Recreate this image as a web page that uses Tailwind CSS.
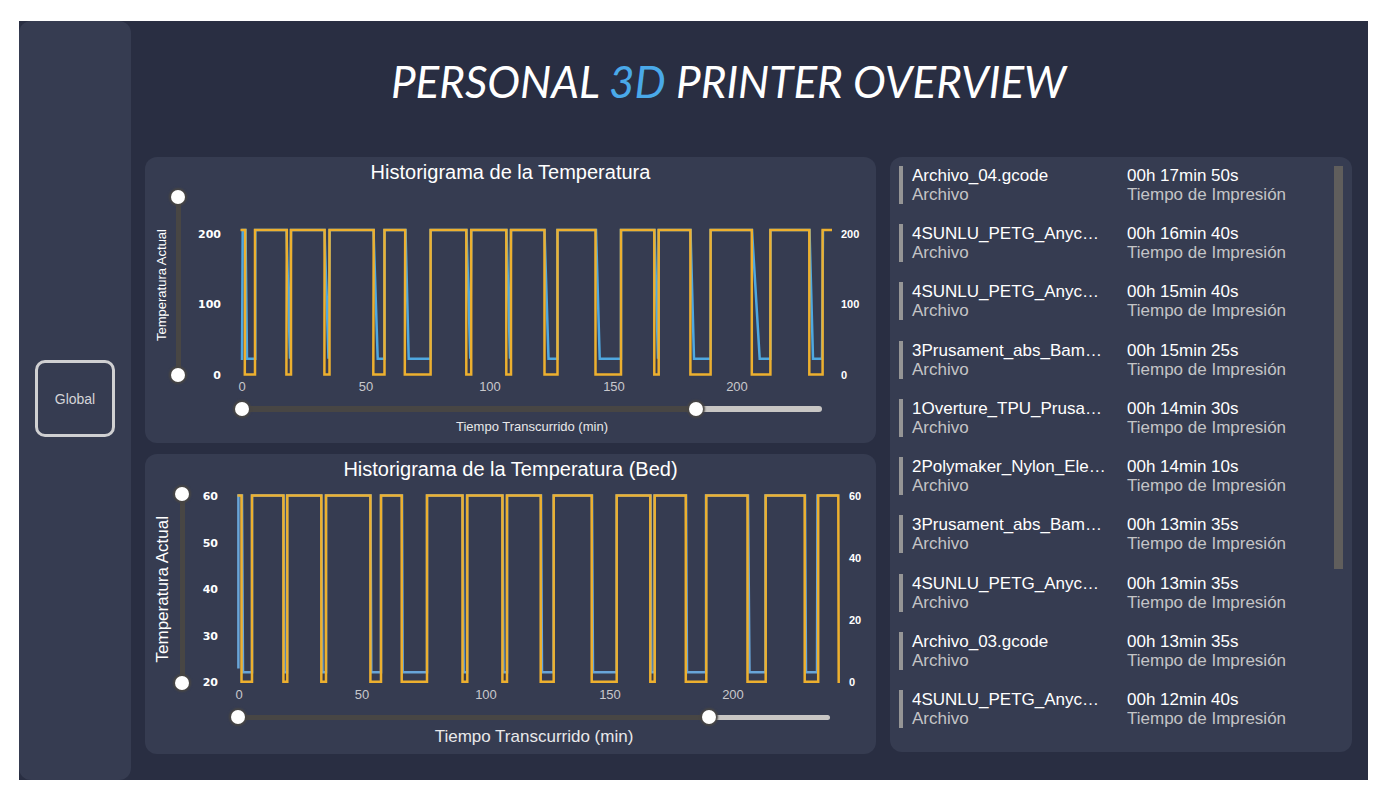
<!DOCTYPE html>
<html lang="es">
<head>
<meta charset="utf-8">
<title>Personal 3D Printer Overview</title>
<script src="https://cdn.jsdelivr.net/npm/@tailwindcss/browser@4"></script>
</head>
<body class="flex min-h-screen bg-white pt-[21px] pr-6 pb-5 pl-[19px] font-['Liberation_Sans',Arial,sans-serif]">
<div class="flex flex-1 bg-[#292e42]">
  <nav class="flex w-28 shrink-0 items-center justify-center rounded-xl bg-[#363c51] pb-1" aria-label="Páginas">
    <button type="button" class="h-[77px] w-20 rounded-[10px] border-[3px] border-[#d0d0d2] text-sm text-[#d4d4d8]">Global</button>
  </nav>

  <main class="flex min-w-0 flex-1 flex-col pr-4 pb-[26px] pl-[14px]">
    <header class="flex h-[136px] items-center justify-center pr-10 pb-4">
      <h1 class="whitespace-nowrap font-['Lato',sans-serif] text-[44px] leading-none text-white italic">PERSONAL <span class="text-[#4aa9e9]">3D</span> PRINTER OVERVIEW</h1>
    </header>

    <div class="grid grid-cols-[731fr_462fr] items-start gap-[14px]">
      <div class="flex min-w-0 flex-col gap-[11px]">

        <section class="rounded-xl bg-[#363c51] pb-2" aria-labelledby="t1">
          <h2 id="t1" class="text-center text-xl leading-[30px] text-white">Historigrama de la Temperatura</h2>
          <div class="grid grid-cols-[26px_14px_1fr]">
            <div class="flex items-center justify-end pr-px pb-[14px]">
              <span class="rotate-180 text-[13px] leading-4 whitespace-nowrap text-white [writing-mode:vertical-rl]">Temperatura Actual</span>
            </div>
            <div class="relative mt-[3px] h-48">
              <div class="absolute inset-y-[7px] left-[5px] w-[5px] bg-[#484644]"></div>
              <input type="range" min="0" max="250" value="0" aria-label="Temperatura mínima" class="pointer-events-none absolute inset-0 h-full w-[14px] appearance-none bg-transparent [direction:rtl] [writing-mode:vertical-lr] [&::-webkit-slider-thumb]:pointer-events-auto [&::-webkit-slider-thumb]:size-[14px] [&::-webkit-slider-thumb]:appearance-none [&::-webkit-slider-thumb]:rounded-full [&::-webkit-slider-thumb]:bg-white [&::-webkit-slider-thumb]:shadow-[0_0_2px_2px_#484644]">
              <input type="range" min="0" max="250" value="250" aria-label="Temperatura máxima" class="pointer-events-none absolute inset-0 h-full w-[14px] appearance-none bg-transparent [direction:rtl] [writing-mode:vertical-lr] [&::-webkit-slider-thumb]:pointer-events-auto [&::-webkit-slider-thumb]:size-[14px] [&::-webkit-slider-thumb]:appearance-none [&::-webkit-slider-thumb]:rounded-full [&::-webkit-slider-thumb]:bg-white [&::-webkit-slider-thumb]:shadow-[0_0_2px_2px_#484644]">
            </div>
            <svg viewBox="190 187 686 210" class="ml-[5px] h-auto w-[calc(100%-5px)]" role="img" aria-label="Temperatura actual por tiempo transcurrido">
              <g class="fill-white font-['DejaVu_Sans',sans-serif] text-[11px] font-bold" text-anchor="end">
                <text x="221" y="238">200</text><text x="221" y="308">100</text><text x="221" y="379">0</text>
              </g>
              <g class="fill-white font-['Liberation_Sans_Narrow','Liberation_Sans',sans-serif] text-[11px] font-bold">
                <text x="841" y="238">200</text><text x="841" y="308">100</text><text x="841" y="379">0</text>
              </g>
              <g class="fill-[#c8c8cc] text-[13px]" text-anchor="middle">
                <text x="242" y="391">0</text><text x="366" y="391">50</text><text x="490" y="391">100</text><text x="614" y="391">150</text><text x="737" y="391">200</text>
              </g>
              <path class="fill-none stroke-[#4fa8e0] stroke-[2.5]" d="M242 360L242.7 230H245.5L247 358.7H255.3V230H286.5L290 358.7L291 230H324.5L328.5 358.7L329.7 230H373.5L377.7 358.7H384.5V230H405.5L408.7 358.7H430.7V230H466.5L470.3 358.7L471.3 230H506.5L510 358.7L511 230H544.5L548.5 358.7H557.5V230H596L599.7 358.7H621V230H654.5L658 358.7L658.7 230H690.5L694 358.7H710.7V230H752L759.7 358.7H770.5V230H809.5L813 358.7H822L823 230"/>
              <path class="fill-none stroke-[#edb02f] stroke-[2.5]" d="M240.5 230H245.2L244.8 374.5H255V230H286.8L286.4 374.5H291V230H324.6L324.4 374.5H329.5V230H373.7L373.3 374.5H384.5V230H405.2L404.8 374.5H430.6V230H466.3V374.5H471.2V230H506.3V374.5H511V230H544.5V374.5H557.5V230H595.5V374.5H621V230H654.3V374.5H658.7V230H690.4V374.5H710.6V230H751.8V374.5H770.4V230H809.3V374.5H822.6V230H832"/>
            </svg>
          </div>
          <div class="relative mt-[5px] mr-[54px] ml-[97px] flex h-[14px] items-center">
            <div class="h-[6px] flex-1 rounded-full bg-[#c8c6c4]"><div class="h-full rounded-l-full bg-[#484644]" style="width:78.2%"></div></div>
            <input type="range" min="0" max="1000" value="0" aria-label="Tiempo inicial" class="pointer-events-none absolute -left-[7px] h-[14px] w-[calc(100%+14px)] appearance-none bg-transparent [&::-webkit-slider-thumb]:pointer-events-auto [&::-webkit-slider-thumb]:size-[14px] [&::-webkit-slider-thumb]:appearance-none [&::-webkit-slider-thumb]:rounded-full [&::-webkit-slider-thumb]:bg-white [&::-webkit-slider-thumb]:shadow-[0_0_2px_2px_#484644]">
            <input type="range" min="0" max="1000" value="782" aria-label="Tiempo final" class="pointer-events-none absolute -left-[7px] h-[14px] w-[calc(100%+14px)] appearance-none bg-transparent [&::-webkit-slider-thumb]:pointer-events-auto [&::-webkit-slider-thumb]:size-[14px] [&::-webkit-slider-thumb]:appearance-none [&::-webkit-slider-thumb]:rounded-full [&::-webkit-slider-thumb]:bg-white [&::-webkit-slider-thumb]:shadow-[0_0_2px_2px_#484644]">
          </div>
          <p class="mt-[3px] mr-[54px] ml-[97px] text-center text-[13px] leading-4 text-[#e8e8ea]">Tiempo Transcurrido (min)</p>
        </section>

        <section class="rounded-xl bg-[#363c51] pb-[7px]" aria-labelledby="t2">
          <h2 id="t2" class="text-center text-xl leading-[30px] text-white">Historigrama de la Temperatura (Bed)</h2>
          <div class="grid grid-cols-[30px_14px_1fr]">
            <div class="flex items-center justify-end pr-[2px] pb-[11px]">
              <span class="rotate-180 text-[17px] leading-5 whitespace-nowrap text-white [writing-mode:vertical-rl]">Temperatura Actual</span>
            </div>
            <div class="relative mt-[3px] h-[203px]">
              <div class="absolute inset-y-[7px] left-[5px] w-[5px] bg-[#484644]"></div>
              <input type="range" min="20" max="60" value="20" aria-label="Temperatura mínima de la cama" class="pointer-events-none absolute inset-0 h-full w-[14px] appearance-none bg-transparent [direction:rtl] [writing-mode:vertical-lr] [&::-webkit-slider-thumb]:pointer-events-auto [&::-webkit-slider-thumb]:size-[14px] [&::-webkit-slider-thumb]:appearance-none [&::-webkit-slider-thumb]:rounded-full [&::-webkit-slider-thumb]:bg-white [&::-webkit-slider-thumb]:shadow-[0_0_2px_2px_#484644]">
              <input type="range" min="20" max="60" value="60" aria-label="Temperatura máxima de la cama" class="pointer-events-none absolute inset-0 h-full w-[14px] appearance-none bg-transparent [direction:rtl] [writing-mode:vertical-lr] [&::-webkit-slider-thumb]:pointer-events-auto [&::-webkit-slider-thumb]:size-[14px] [&::-webkit-slider-thumb]:appearance-none [&::-webkit-slider-thumb]:rounded-full [&::-webkit-slider-thumb]:bg-white [&::-webkit-slider-thumb]:shadow-[0_0_2px_2px_#484644]">
            </div>
            <svg viewBox="190 484 686 221" class="ml-px h-auto w-[calc(100%-1px)]" role="img" aria-label="Temperatura de la cama por tiempo transcurrido">
              <g class="fill-white font-['DejaVu_Sans',sans-serif] text-[11px] font-bold" text-anchor="end">
                <text x="218" y="500">60</text><text x="218" y="547">50</text><text x="218" y="593">40</text><text x="218" y="640">30</text><text x="218" y="686">20</text>
              </g>
              <g class="fill-white font-['Liberation_Sans_Narrow','Liberation_Sans',sans-serif] text-[11px] font-bold">
                <text x="849" y="500">60</text><text x="849" y="562">40</text><text x="849" y="624">20</text><text x="849" y="686">0</text>
              </g>
              <g class="fill-[#c8c8cc] text-[13px]" text-anchor="middle">
                <text x="239" y="699">0</text><text x="362" y="699">50</text><text x="486" y="699">100</text><text x="610" y="699">150</text><text x="733" y="699">200</text>
              </g>
              <path class="fill-none stroke-[#69a5d8] stroke-[2.5]" d="M238.4 668.5V495.5H242L243 672.3H252V495.5H283.5L284.3 672.3H287V495.5H321.3L322.5 672.3H326V495.5H370.5L371.3 672.3H381V495.5H402L402.7 672.3H427V495.5H462.5L463.7 672.3H467V495.5H502.5L503.5 672.3H507V495.5H541L542 672.3H553.7V495.5H592L593 672.3H616.7V495.5H650.5L651.5 672.3H654.5V495.5H686L687 672.3H706V495.5H748L749.5 672.3H765.5V495.5H805L806 672.3H817L817.5 495.5H838.5"/>
              <path class="fill-none stroke-[#edb02f] stroke-[2.5]" d="M237.5 495.5H241.5V681.7H252V495.5H283.4V681.7H287.3V495.5H321.3V681.7H326V495.5H370.4V681.7H381V495.5H401.7V681.7H427V495.5H462.5V681.7H467.3V495.5H502.4V681.7H507V495.5H540.7V681.7H553.7V495.5H591.7V681.7H616.7V495.5H650.3V681.7H654.7V495.5H685.8V681.7H706.3V495.5H747.5V681.7H765.7V495.5H804.7V681.7H818.2V495.5H838.3L838.7 683"/>
            </svg>
          </div>
          <div class="relative mt-[5px] mr-[46px] ml-[93px] flex h-[14px] items-center">
            <div class="h-[5px] flex-1 rounded-full bg-[#c8c6c4]"><div class="h-full rounded-l-full bg-[#484644]" style="width:79.6%"></div></div>
            <input type="range" min="0" max="1000" value="0" aria-label="Tiempo inicial de la cama" class="pointer-events-none absolute -left-[7px] h-[14px] w-[calc(100%+14px)] appearance-none bg-transparent [&::-webkit-slider-thumb]:pointer-events-auto [&::-webkit-slider-thumb]:size-[14px] [&::-webkit-slider-thumb]:appearance-none [&::-webkit-slider-thumb]:rounded-full [&::-webkit-slider-thumb]:bg-white [&::-webkit-slider-thumb]:shadow-[0_0_2px_2px_#484644]">
            <input type="range" min="0" max="1000" value="796" aria-label="Tiempo final de la cama" class="pointer-events-none absolute -left-[7px] h-[14px] w-[calc(100%+14px)] appearance-none bg-transparent [&::-webkit-slider-thumb]:pointer-events-auto [&::-webkit-slider-thumb]:size-[14px] [&::-webkit-slider-thumb]:appearance-none [&::-webkit-slider-thumb]:rounded-full [&::-webkit-slider-thumb]:bg-white [&::-webkit-slider-thumb]:shadow-[0_0_2px_2px_#484644]">
          </div>
          <p class="mt-[3px] mr-[46px] ml-[93px] text-center text-[17px] leading-5 text-[#e8e8ea]">Tiempo Transcurrido (min)</p>
        </section>
      </div>

      <section class="flex min-w-0 gap-2 rounded-xl bg-[#363c51] pt-[9px] pr-[9px] pb-6 pl-[9px]" aria-label="Impresiones">
        <ul class="flex min-h-[562px] min-w-0 flex-1 flex-col justify-between text-[17px] leading-[19px] text-[#c4c4c6]">
          <li class="grid grid-cols-[215px_1fr] border-l-4 border-[#959595] pl-[9px]"><div><p class="text-white">Archivo_04.gcode</p><p>Archivo</p></div><div><p class="text-white">00h 17min 50s</p><p>Tiempo de Impresión</p></div></li>
          <li class="grid grid-cols-[215px_1fr] border-l-4 border-[#959595] pl-[9px]"><div><p class="text-white">4SUNLU_PETG_Anyc…</p><p>Archivo</p></div><div><p class="text-white">00h 16min 40s</p><p>Tiempo de Impresión</p></div></li>
          <li class="grid grid-cols-[215px_1fr] border-l-4 border-[#959595] pl-[9px]"><div><p class="text-white">4SUNLU_PETG_Anyc…</p><p>Archivo</p></div><div><p class="text-white">00h 15min 40s</p><p>Tiempo de Impresión</p></div></li>
          <li class="grid grid-cols-[215px_1fr] border-l-4 border-[#959595] pl-[9px]"><div><p class="text-white">3Prusament_abs_Bam…</p><p>Archivo</p></div><div><p class="text-white">00h 15min 25s</p><p>Tiempo de Impresión</p></div></li>
          <li class="grid grid-cols-[215px_1fr] border-l-4 border-[#959595] pl-[9px]"><div><p class="text-white">1Overture_TPU_Prusa…</p><p>Archivo</p></div><div><p class="text-white">00h 14min 30s</p><p>Tiempo de Impresión</p></div></li>
          <li class="grid grid-cols-[215px_1fr] border-l-4 border-[#959595] pl-[9px]"><div><p class="text-white">2Polymaker_Nylon_Ele…</p><p>Archivo</p></div><div><p class="text-white">00h 14min 10s</p><p>Tiempo de Impresión</p></div></li>
          <li class="grid grid-cols-[215px_1fr] border-l-4 border-[#959595] pl-[9px]"><div><p class="text-white">3Prusament_abs_Bam…</p><p>Archivo</p></div><div><p class="text-white">00h 13min 35s</p><p>Tiempo de Impresión</p></div></li>
          <li class="grid grid-cols-[215px_1fr] border-l-4 border-[#959595] pl-[9px]"><div><p class="text-white">4SUNLU_PETG_Anyc…</p><p>Archivo</p></div><div><p class="text-white">00h 13min 35s</p><p>Tiempo de Impresión</p></div></li>
          <li class="grid grid-cols-[215px_1fr] border-l-4 border-[#959595] pl-[9px]"><div><p class="text-white">Archivo_03.gcode</p><p>Archivo</p></div><div><p class="text-white">00h 13min 35s</p><p>Tiempo de Impresión</p></div></li>
          <li class="grid grid-cols-[215px_1fr] border-l-4 border-[#959595] pl-[9px]"><div><p class="text-white">4SUNLU_PETG_Anyc…</p><p>Archivo</p></div><div><p class="text-white">00h 12min 40s</p><p>Tiempo de Impresión</p></div></li>
        </ul>
        <div class="w-[9px] shrink-0"><div class="h-[403px] bg-[#605e5c]"></div></div>
      </section>
    </div>
  </main>
</div>
</body>
</html>
